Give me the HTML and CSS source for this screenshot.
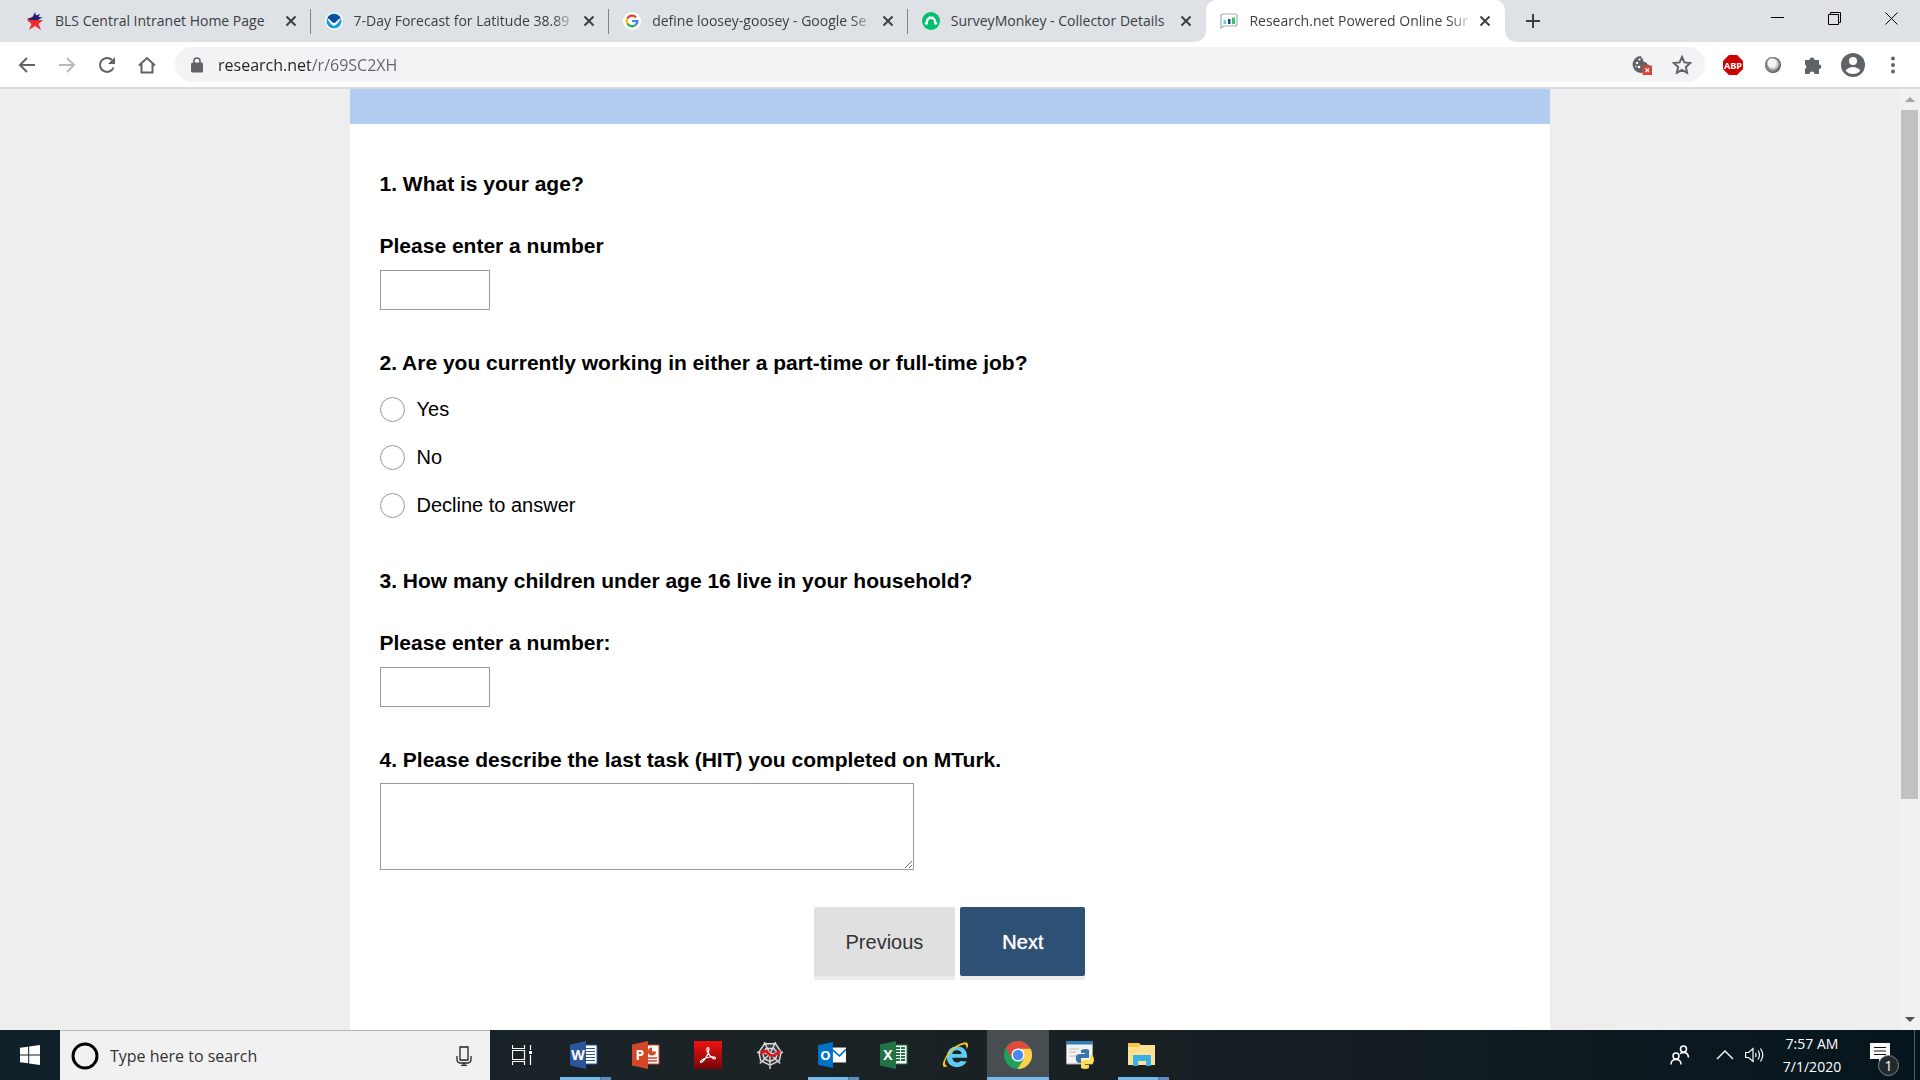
FILE: index.html
```html
<!DOCTYPE html>
<html lang="en">
<head>
<meta charset="utf-8">
<title>Research.net Powered Online Survey</title>
<link rel="stylesheet" href="styles.css">
</head>
<body>
<header class="browser">
  <div class="tabstrip">
    <nav class="tabs" aria-label="Open tabs">
      <div class="tab">
        <svg class="favicon" viewBox="0 0 18 20"><path d="M9 4l2 5h6l-4.500 4L15 19l-6-4-6 4 2.500-6L1 9z" fill="#ee2a2e"/><path d="M1 7.500l5.500-1L9 1l1 3.500 4-1.500-1.500 3 4 .5-4.500 2.500H5z" fill="#1d1d78"/></svg>
        <a class="tab-title" href="#">BLS Central Intranet Home Page</a>
        <button class="tab-close" aria-label="Close tab"><svg viewBox="0 0 12 12"><path d="M1.500 1.500l9 9m0-9l-9 9"/></svg></button>
      </div>
      <div class="tab">
        <svg class="favicon" viewBox="0 0 18 18"><circle cx="9" cy="9" r="9" fill="#fff"/><circle cx="9" cy="9" r="7.500" fill="#139bdb"/><path d="M2 7a7.500 7.500 0 0 1 14 0l-6 6H8z" fill="#0c4da0"/><path d="M2 6q3 1 5 4 2 2 4 0 2-3 5-4-2 5-7 8-5-3-7-8z" fill="#fff"/><path d="M5 5h8l-4 5z" fill="#0c4da0"/></svg>
        <a class="tab-title tab-title-long" href="#">7-Day Forecast for Latitude 38.89</a>
        <button class="tab-close" aria-label="Close tab"><svg viewBox="0 0 12 12"><path d="M1.500 1.500l9 9m0-9l-9 9"/></svg></button>
      </div>
      <div class="tab">
        <svg class="favicon" viewBox="0 0 20 20"><circle cx="10" cy="10" r="10" fill="#fff"/><g fill="none" stroke-width="2.600"><path d="M14.500 6A6 6 0 0 0 4.800 7.200" stroke="#ea4335"/><path d="M4.800 7.200a6 6 0 0 0 0 5.600" stroke="#fbbc05"/><path d="M4.800 12.800a6 6 0 0 0 9 1.700" stroke="#34a853"/><path d="M13.800 14.500A6 6 0 0 0 16 10.200H10" stroke="#4285f4"/></g></svg>
        <a class="tab-title tab-title-long" href="#">define loosey-goosey - Google Se</a>
        <button class="tab-close" aria-label="Close tab"><svg viewBox="0 0 12 12"><path d="M1.500 1.500l9 9m0-9l-9 9"/></svg></button>
      </div>
      <div class="tab tab-last">
        <svg class="favicon" viewBox="0 0 20 20"><circle cx="10" cy="10" r="10" fill="#00bf6f"/><path d="M5 12.500Q5.500 6.500 10 6.500t5 6" fill="none" stroke="#fff" stroke-width="2.600"/><circle cx="4.800" cy="12.500" r="1.800" fill="#fff"/><circle cx="15.200" cy="12.500" r="1.800" fill="#fff"/><circle cx="8.500" cy="5.800" r="1.200" fill="#fff"/><circle cx="11.500" cy="5.800" r="1.200" fill="#fff"/></svg>
        <a class="tab-title" href="#">SurveyMonkey - Collector Details</a>
        <button class="tab-close" aria-label="Close tab"><svg viewBox="0 0 12 12"><path d="M1.500 1.500l9 9m0-9l-9 9"/></svg></button>
      </div>
      <div class="tab tab-active">
        <svg class="favicon" viewBox="0 0 18 16"><path d="M1 15V3q0-2 2-2h12q2 0 2 2v8q0 2-2 2H4z" fill="#fff" stroke="#a5adb0" stroke-width="1.200"/><path d="M3.500 7h2.500v4H3.500z" fill="#5fd4dd"/><path d="M8 6h2.500v5H8z" fill="#174a7c"/><path d="M12 4.500h3V11h-3z" fill="#35c46a"/></svg>
        <a class="tab-title tab-title-long" href="#" aria-current="page">Research.net Powered Online Sur</a>
        <button class="tab-close" aria-label="Close tab"><svg viewBox="0 0 12 12"><path d="M1.500 1.500l9 9m0-9l-9 9"/></svg></button>
      </div>
    </nav>
    <button class="new-tab" aria-label="New tab"><svg viewBox="0 0 16 16"><path d="M8 1v14M1 8h14"/></svg></button>
    <div class="window-controls">
      <button class="window-btn" aria-label="Minimize"><svg viewBox="0 0 13 13"><path d="M0 5.500h13"/></svg></button>
      <button class="window-btn" aria-label="Restore"><svg viewBox="0 0 13 13"><path d="M.5 2.500h10v10H.5zM2.500 2.500v-2h10v10h-2"/></svg></button>
      <button class="window-btn" aria-label="Close"><svg viewBox="0 0 13 13"><path d="M.5.500l12 12m0-12l-12 12"/></svg></button>
    </div>
  </div>
  <div class="toolbar">
    <div class="nav-buttons">
      <button class="icon-btn" aria-label="Back"><svg viewBox="0 0 20 20"><path d="M18 10H4m6-7l-7 7 7 7" class="line"/></svg></button>
      <button class="icon-btn icon-off" aria-label="Forward" disabled><svg viewBox="0 0 20 20"><path d="M2 10h14m-6-7l7 7-7 7" class="line"/></svg></button>
      <button class="icon-btn" aria-label="Reload"><svg viewBox="0 0 20 20"><path d="M16.500 12.500A7 7 0 1 1 15 5" class="line"/><path d="M18 2v7h-7z"/></svg></button>
      <button class="icon-btn" aria-label="Home"><svg viewBox="0 0 20 20"><path d="M2 10.500L10 3l8 7.500M4.500 9v8.500h11V9" class="line"/></svg></button>
    </div>
    <div class="omnibox">
      <svg class="lock" viewBox="0 0 12 16"><path d="M1.500 5.500h9q1.500 0 1.500 1.500v7q0 1.500-1.500 1.500h-9Q0 15.500 0 14V7q0-1.500 1.500-1.500z"/><path d="M3 7V4a3 3 0 0 1 6 0v3" fill="none" stroke="#5f6368" stroke-width="1.600"/></svg>
      <input class="url" type="text" aria-label="Address" value="research.net/r/69SC2XH">
      <button class="icon-btn" aria-label="Cookies blocked"><svg viewBox="0 0 20 20"><path d="M9 1a8.500 8.500 0 1 0 8.500 9q-2.500 0-3-2.500Q11 7.500 11 4 9 3.500 9 1z"/><g fill="#fff"><circle cx="5" cy="8" r="1.200"/><circle cx="7" cy="12" r="1.300"/><circle cx="7.500" cy="4.500" r="1.100"/><circle cx="4" cy="11.500" r=".8"/></g><path d="M10.500 10.500H20V20h-9.500z" fill="#db4437"/><path d="M13.500 13.500l3.500 3.500m0-3.500L13.500 17" stroke="#fff" stroke-width="1.200"/></svg></button>
      <button class="icon-btn" aria-label="Bookmark this page"><svg viewBox="0 0 20 20"><path d="M10 2l2.400 5.400 5.800.6-4.300 4 1.200 5.800L10 14.900l-5.100 2.900L6.100 12 1.800 8l5.800-.6z" class="line"/></svg></button>
    </div>
    <div class="extensions">
      <button class="icon-btn" aria-label="Adblock Plus"><svg viewBox="0 0 22 22"><path d="M6.500 0h9L22 6.500v9L15.500 22h-9L0 15.500v-9z" fill="#cc0000"/><text x="11" y="15" text-anchor="middle" class="abp">ABP</text></svg></button>
      <button class="icon-btn" aria-label="Extension"><svg viewBox="0 0 20 20"><circle cx="10" cy="10" r="8" fill="#555"/><circle cx="9.500" cy="9.500" r="7.500" fill="#888"/><circle cx="10" cy="9" r="5.500" fill="#cfd1d3"/><circle cx="9" cy="8" r="4.500" fill="#f5f5f5"/></svg></button>
      <button class="icon-btn" aria-label="Extensions"><svg viewBox="0 0 20 20"><path d="M2 5h4.500a2.500 2.500 0 1 1 5 0H16v4.500a2.300 2.300 0 1 1 0 4.600V19h-4.500a2.500 2.500 0 0 0-5 0H2v-5a2.500 2.500 0 0 0 0-4.500z"/></svg></button>
      <button class="icon-btn" aria-label="Profile"><svg class="avatar" viewBox="0 0 24 24"><circle cx="12" cy="12" r="12"/><circle cx="12" cy="8" r="4" fill="#fff"/><path d="M4.500 17.500q3-3.500 7.500-3.500t7.500 3.500Q16.500 21 12 21t-7.500-3.500z" fill="#fff"/></svg></button>
      <button class="icon-btn" aria-label="Menu"><svg viewBox="0 0 20 20"><circle cx="10" cy="3.500" r="2"/><circle cx="10" cy="10" r="2"/><circle cx="10" cy="16.500" r="2"/></svg></button>
    </div>
  </div>
</header>

<div class="viewport">
  <main class="survey">
    <div class="survey-banner"></div>
    <form class="survey-form">
      <section class="question">
        <h2 class="question-title">1. What is your age?</h2>
        <label class="question-hint" for="age">Please enter a number</label>
        <input class="number-box" type="text" id="age">
      </section>
      <fieldset class="question question-choices">
        <legend class="question-title">2. Are you currently working in either a part-time or full-time job?</legend>
        <label class="choice"><input type="radio" name="job">Yes</label>
        <label class="choice"><input type="radio" name="job">No</label>
        <label class="choice"><input type="radio" name="job">Decline to answer</label>
      </fieldset>
      <section class="question">
        <h2 class="question-title">3. How many children under age 16 live in your household?</h2>
        <label class="question-hint" for="children">Please enter a number:</label>
        <input class="number-box" type="text" id="children">
      </section>
      <section class="question question-essay">
        <label class="question-title" for="task">4. Please describe the last task (HIT) you completed on MTurk.</label>
        <textarea class="essay-box" id="task"></textarea>
      </section>
      <div class="actions">
        <button class="action" type="button">Previous</button>
        <button class="action action-next" type="button">Next</button>
      </div>
    </form>
  </main>
  <div class="scrollbar" aria-hidden="true">
    <span class="arrow arrow-up"></span>
    <div class="track"><div class="thumb"></div></div>
    <span class="arrow arrow-down"></span>
  </div>
</div>

<footer class="taskbar">
  <button class="start" aria-label="Start"><svg viewBox="0 0 20 20"><path d="M0 2.800L8.200 1.700v7.800H0zM9.200 1.500L20 0v9.500H9.200zM0 10.500h8.200v7.800L0 17.200zM9.200 10.500H20V20L9.200 18.500z" fill="#fff"/></svg></button>
  <label class="search">
    <svg class="ring" viewBox="0 0 28 28"><circle cx="14" cy="14" r="12" fill="none" stroke="#000" stroke-width="3"/></svg>
    <input class="search-input" type="text" placeholder="Type here to search" aria-label="Search">
    <svg class="mic" viewBox="0 0 16 20"><path d="M4 1h8v13H4zM1 10v3.500q0 3.500 4 3.500h6q4 0 4-3.500V10M8 17v2.500M5 19.300h6" fill="none" stroke="#222" stroke-width="1.300"/></svg>
  </label>
  <div class="apps">
    <button class="app" aria-label="Task View"><svg class="taskview" viewBox="0 0 20 20"><path d="M.5 0v3.500h12V0M.5 5.500h12v9H.500zM.5 20v-3.500h12V20M18.500 0v5M18.500 10v10" fill="none" stroke="#fff" stroke-width="1.200"/><path d="M17 6h3v3h-3z" fill="#fff"/></svg></button>
    <button class="app app-stack" aria-label="Word"><svg viewBox="0 0 28 28"><path d="M14 4h13v19H14z" fill="#fff" stroke="#2b579a"/><path d="M16 7.500h9m-9 3h9m-9 3h9m-9 3h9m-9 3h9" stroke="#2b579a" stroke-width="1.200"/><path d="M0 3.500L16 0v28L0 24.500z" fill="#2b579a"/><text x="8" y="19" class="glyph">W</text></svg></button>
    <button class="app" aria-label="PowerPoint"><svg viewBox="0 0 28 28"><path d="M14 4h13v19H14z" fill="#fff" stroke="#d24726"/><circle cx="20" cy="10.500" r="4" fill="#d24726"/><path d="M20 10.500V6a4.500 4.500 0 0 1 4.500 4.500z" fill="#fff"/><path d="M16 17h9m-9 3h9" stroke="#d24726" stroke-width="1.300"/><path d="M0 3.500L16 0v28L0 24.500z" fill="#d24726"/><text x="8" y="19" class="glyph">P</text></svg></button>
    <button class="app" aria-label="Acrobat"><svg viewBox="0 0 28 28"><defs><linearGradient id="acro" x2="0" y2="1"><stop stop-color="#ef1212"/><stop offset="1" stop-color="#780606"/></linearGradient></defs><path d="M0 0h28v28H0z" fill="url(#acro)"/><path d="M13 7q3-2 1.500 4Q12 18 8 21q-2 1-1.500-.5Q9 17 16 16q6-.5 5.500 1.500-1 1.500-4-1.500-5-4-4.500-9z" fill="none" stroke="#fff" stroke-width="1.200"/></svg></button>
    <button class="app" aria-label="Spyder"><svg viewBox="0 0 30 30"><path d="M9 3h12l6 9-1 9-5 4H9l-5-4-1-9z" fill="#3b3d40"/><path d="M15 14L9 1m6 13l6-13m-6 13l14-2m-14 2l11 10M15 14v16m0-16L4 24m11-10L1 12M9 3h12l6 9-2 9-10 5-10-5-2-9zM11 8h8l4 5-2 6-6 3-6-3-2-6z" fill="none" stroke="#ddd" stroke-width="1.500"/><path d="M5 14q5-5 8-1t7 2l6-4" fill="none" stroke="#e8141c" stroke-width="3"/></svg></button>
    <button class="app app-stack" aria-label="Outlook"><svg viewBox="0 0 30 28"><path d="M14 6h16v16H14z" fill="#fff"/><path d="M15 8l8 7 7-7" fill="none" stroke="#0072c6" stroke-width="1.800"/><path d="M0 3.500L16 0v28L0 24.500z" fill="#0072c6"/><text x="8" y="19" class="glyph">O</text></svg></button>
    <button class="app" aria-label="Excel"><svg viewBox="0 0 28 28"><path d="M14 4h13v19H14z" fill="#fff" stroke="#217346"/><path d="M16 7h4m1 0h4m-9 3h4m1 0h4m-9 3h4m1 0h4m-9 3h4m1 0h4m-9 3h4m1 0h4" stroke="#217346" stroke-width="2"/><path d="M0 3.500L16 0v28L0 24.500z" fill="#217346"/><text x="8" y="19" class="glyph">X</text></svg></button>
    <button class="app" aria-label="Internet Explorer"><svg viewBox="0 0 30 30"><path d="M26.500 22q-3.500 6-11 6Q5 27 5 16.500 6 6 16 5.500 27 6 27 18H11q.5 4.500 5 5 3 0 4-1.500zM11 14h10q-.5-4-5-4t-5 4z" fill="#5fcbf5"/><path d="M6 27q-7 3-4.500-5Q6 10 17 4q11-6 11 1-.5 2-2 4 1-5-2-5.500Q12 6 5 18q-4 8 1 9z" fill="#f7c81e"/></svg></button>
    <button class="app app-current" aria-label="Chrome"><svg viewBox="0 0 28 28"><circle cx="14" cy="14" r="14" fill="#1fa15d"/><path d="M14 14L1.900 7a14 14 0 0 1 24.200 0z" fill="#de4a3d"/><path d="M1.900 7L8 17.500 14 7.700z" fill="#de4a3d"/><path d="M14 7.700h12.600A14 14 0 0 1 13.500 28L20 17.500z" fill="#fdd04b"/><circle cx="14" cy="14" r="6.600" fill="#fff"/><circle cx="14" cy="14" r="5.200" fill="#4a87f2"/></svg></button>
    <button class="app" aria-label="Python"><svg viewBox="0 0 28 28"><path d="M.5 1h26v22H.5z" fill="#f3f3f3" stroke="#9fa7ad"/><path d="M0 0h27v3.500H0z" fill="#2f80b8"/><path d="M3 8h10M3 11h7M3 15h8" stroke="#bbb"/><path d="M15 9q5-2 8 0v8h-8v5h-2q-4-1-3-7 1-2 4-2h5v-1h-4z" fill="#3a75a9"/><path d="M24 14q4 0 4 5 0 4-4 4h-5v1h4v3q-4 2-8 0v-6q0-2 3-2h6z" fill="#ffdc50"/></svg></button>
    <button class="app app-stack" aria-label="File Explorer"><svg viewBox="0 0 28 28"><path d="M0 2h11l2 2h14v20H0z" fill="#f6c544"/><path d="M0 6h9l4-2h14v20H0z" fill="#ffe194"/><path d="M5 25V14h18v11h-5v-5h-8v5z" fill="#35b1e5"/></svg></button>
  </div>
  <div class="tray">
    <button class="tray-btn" aria-label="People"><svg viewBox="0 0 20 20"><g fill="none" stroke="#fff" stroke-width="1.500"><circle cx="13.500" cy="4" r="3"/><circle cx="6" cy="11" r="3"/><path d="M1 19.500q0-5 5-5t5 5M10 8.500q8-3 8.500 4"/></g></svg></button>
    <button class="tray-btn tray-narrow" aria-label="Show hidden icons"><svg viewBox="0 0 20 20"><path d="M2 14l8-8 8 8" fill="none" stroke="#fff" stroke-width="1.400"/></svg></button>
    <button class="tray-btn tray-narrow" aria-label="Volume"><svg viewBox="0 0 20 20"><path d="M.6 7.500h3L8 3.500v13l-4.400-4H.6zM10.500 8q1 2 0 4M13 5.500q3 4.500 0 9M15.500 3.500q4.500 6.500 0 13" fill="none" stroke="#fff" stroke-width="1.200"/></svg></button>
    <time class="clock" datetime="2020-07-01T07:57"><span>7:57 AM</span><span>7/1/2020</span></time>
    <button class="notify" aria-label="Notifications"><svg viewBox="0 0 20 20"><path d="M0 0h20v16h-7l-4 4v-4H0z" fill="#fff"/><path d="M4 4.500h12M4 8h12M4 11.500h12" stroke="#111" stroke-width="1.200"/></svg><span class="badge">1</span></button>
    <span class="show-desktop"></span>
  </div>
</footer>
</body>
</html>
```
FILE: styles.css
```css
* { box-sizing: border-box; }

body {
  margin: 0;
  min-height: 100vh;
  display: flex;
  flex-direction: column;
  background: #eeeeee;
  font-family: "Open Sans", "Noto Sans", sans-serif;
  font-size: 14px;
  color: #3c4043;
}

button {
  padding: 0;
  border: 0;
  background: none;
  font: inherit;
  color: inherit;
  display: flex;
  align-items: center;
  justify-content: center;
}

svg { display: block; flex: none; }

/* Tab strip */
.browser { border-bottom: 2px solid #d9dae0; }
.tabstrip {
  display: flex;
  height: 42px;
  padding-left: 12px;
  background: #dee1e6;
}
.tabs { display: flex; flex: 0 1 1493px; min-width: 0; }
.tab {
  position: relative;
  display: flex;
  align-items: center;
  flex: 1 1 0;
  min-width: 0;
  padding: 0 14px;
}
.tab:not(.tab-active):not(.tab-last)::after {
  content: "";
  position: absolute;
  right: 0;
  top: 9px;
  width: 1px;
  height: 25px;
  background: #808387;
}
.tab-active { background: #ffffff; border-radius: 10px 10px 0 0; }

/* White flares where the active tab meets the toolbar */
.tab-active::before,
.tab-active::after {
  content: "";
  position: absolute;
  bottom: 0;
  width: 10px;
  height: 10px;
}
.tab-active::before { right: 100%; background: radial-gradient(circle at 0 0, #dee1e6 9px, #ffffff 10px); }
.tab-active::after { left: 100%; background: radial-gradient(circle at 100% 0, #dee1e6 9px, #ffffff 10px); }

.favicon { width: 18px; height: 20px; }
.tab-title {
  flex: 1;
  min-width: 0;
  margin: 0 6px 0 11px;
  overflow: hidden;
  white-space: nowrap;
  color: inherit;
  text-decoration: none;
  line-height: 20px;
}
.tab-title-long {
  -webkit-mask-image: linear-gradient(to left, transparent, #000 24px);
  mask-image: linear-gradient(to left, transparent, #000 24px);
}
.tab-close svg { width: 12px; height: 12px; stroke: #3c4043; stroke-width: 2; }
.new-tab { width: 56px; }
.new-tab svg { width: 16px; height: 16px; stroke: #3c4043; stroke-width: 2; }
.window-controls { display: flex; margin-left: auto; padding-bottom: 6px; }
.window-btn { width: 57px; }
.window-btn svg { width: 13px; height: 13px; fill: none; stroke: #000000; }

/* Toolbar */
.toolbar { display: flex; align-items: center; height: 45px; background: #ffffff; }
.nav-buttons { display: flex; padding: 0 7px; width: 175px; }
.icon-btn { width: 40px; height: 34px; flex: none; }
.icon-btn svg { width: 20px; height: 20px; fill: #5f6368; }
.icon-btn .line { fill: none; stroke: #5f6368; stroke-width: 2; }
.icon-off { opacity: .45; }
.icon-btn .avatar { width: 24px; height: 24px; }
.icon-btn .abp { font: bold 10px "Open Sans", sans-serif; fill: #ffffff; }
.omnibox {
  display: flex;
  align-items: center;
  flex: 1;
  min-width: 0;
  height: 35px;
  padding: 0 3px 0 16px;
  border-radius: 18px;
  background: #f1f3f4;
}
.lock { width: 12px; height: 16px; fill: #5f6368; }
.url {
  flex: 1;
  min-width: 0;
  margin-left: 15px;
  padding: 0;
  border: 0;
  outline: 0;
  font: 16px "Open Sans", "Noto Sans", sans-serif;
  color: transparent;
  background: linear-gradient(to right, #202124 92px, #5f6368 92px);
  -webkit-background-clip: text;
  background-clip: text;
}
.extensions { display: flex; padding: 0 7px 0 8px; }

/* Page area */
.viewport { flex: 1; display: flex; }
.survey {
  width: 1200px;
  max-width: 100%;
  margin: 0 auto;
  background: #ffffff;
  color: #000000;
  font-family: "Liberation Sans", Arial, sans-serif;
  font-size: 20px;
  line-height: 26px;
}
.survey-banner { height: 35px; background: #b3cdf2; }
.survey-form { padding: 47px 30px 50px; }
.question { display: flex; flex-direction: column; align-items: flex-start; margin-bottom: 40px; }
.question-title, .question-hint { margin: 0; padding: 0; font-size: 21px; font-weight: bold; }
.question-hint { margin-top: 36px; }
.number-box, .essay-box {
  border: 1px solid #999999;
  border-radius: 0;
  background: #ffffff;
  font: inherit;
  outline: 0;
}
.number-box { width: 110px; height: 40px; margin-top: 11px; }
.essay-box { width: 534px; max-width: 100%; height: 87px; margin-top: 10px; }
.question-choices { gap: 22px; margin: 0 0 50px; padding: 0; border: 0; min-width: 0; }
.question-choices .question-title { margin-bottom: 20px; }
.question-essay { margin-bottom: 37px; }
.choice { display: flex; align-items: center; gap: 12px; }
.choice input {
  appearance: none;
  width: 25px;
  height: 25px;
  margin: 0;
  border: 1px solid #999999;
  border-radius: 50%;
  background: #ffffff;
}
.actions { display: flex; justify-content: center; gap: 5px; }
.action {
  height: 69px;
  padding: 0 32px;
  border-radius: 2px;
  background: #e0e0e0;
  box-shadow: 0 4px 0 #ebebeb;
  color: #333333;
}
.action-next { padding: 0 42px; background: #2e5075; color: #ffffff; text-shadow: 0 0 1px #ffffff; }

.scrollbar {
  width: 21px;
  display: flex;
  flex-direction: column;
  align-items: center;
  background: #f1f1f1;
}
.arrow { height: 21px; display: flex; align-items: center; }
.arrow::before { content: ""; border: 5px solid transparent; }
.arrow-up::before { border-top: 0; border-bottom-color: #a3a3a3; }
.arrow-down::before { border-bottom: 0; border-top-color: #505050; }
.track { flex: 1; width: 17px; display: grid; grid-template-rows: 23fr 7fr; }
.thumb { background: #c1c1c1; }

/* Taskbar */
.taskbar { display: flex; height: 50px; background: linear-gradient(to right, #10212a, #1c2326 40%, #182024 60%, #06151d); color: #ffffff; }
.start { width: 60px; }
.start svg { width: 20px; height: 20px; }
.search {
  display: flex;
  align-items: center;
  flex: 0 1 430px;
  padding: 0 18px 0 11px;
  border-top: 1px solid #b5b5b5;
  background: #f1f1f1;
}
.ring { width: 28px; height: 28px; }
.search-input {
  flex: 1;
  min-width: 0;
  margin-left: 11px;
  padding: 0;
  border: 0;
  outline: 0;
  background: none;
  font: 16px "Open Sans", "Noto Sans", sans-serif;
}
.search-input::placeholder { color: #333333; opacity: 1; }
.mic { width: 16px; height: 20px; }
.apps { display: flex; padding-left: 1px; }
.app { position: relative; width: 62px; }
.app svg { width: 28px; height: 28px; }
.app .taskview { width: 20px; height: 20px; }
.glyph { font: bold 14px "Open Sans", sans-serif; text-anchor: middle; fill: #ffffff; }
.app-stack::after {
  content: "";
  position: absolute;
  left: 7px;
  bottom: 0;
  width: 51px;
  height: 3px;
  background: linear-gradient(to right, #76b9ed 40px, #41719c 40px, #5a8fc0 42px);
}
.app-current { background: #474d50; border-bottom: 3px solid #76b9ed; padding-top: 3px; }
.tray { display: flex; margin-left: auto; }
.tray-btn { width: 60px; }
.tray-btn svg { width: 20px; height: 20px; }
.tray-narrow { width: 30px; }
.clock {
  width: 84px;
  display: flex;
  flex-direction: column;
  justify-content: center;
  align-items: center;
  line-height: 23px;
}
.notify { position: relative; width: 52px; padding-bottom: 4px; }
.notify svg { width: 20px; height: 20px; }
.badge {
  position: absolute;
  left: 24px;
  top: 25px;
  width: 21px;
  height: 21px;
  border: 1px solid #80868a;
  border-radius: 50%;
  background: #22292d;
  line-height: 19px;
  text-align: center;
}
.show-desktop { width: 6px; margin-left: 8px; border-left: 1px solid #59646a; }
```
